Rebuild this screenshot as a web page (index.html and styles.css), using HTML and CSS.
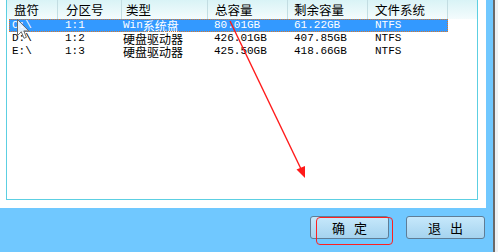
FILE: index.html
```html
<!DOCTYPE html>
<html lang="zh-CN">

<head>
    <meta charset="UTF-8">
    <title>分区选择</title>
    <link rel="stylesheet" href="styles.css">
</head>

<body>
    <div class="screen">
        <div class="window">

            <div class="client">
                <div class="list">
                    <div class="list-head">
                        <div class="hcell c1">盘符</div>
                        <div class="hcell c2">分区号</div>
                        <div class="hcell c3">类型</div>
                        <div class="hcell c4">总容量</div>
                        <div class="hcell c5">剩余容量</div>
                        <div class="hcell c6">文件系统</div>
                        <div class="hcell rest"></div>
                    </div>

                    <div class="row selected">
                        <div class="cell c1">C:\</div>
                        <div class="cell c2">1:1</div>
                        <div class="cell c3">Win<span class="zh">系统盘</span></div>
                        <div class="cell c4">80.01GB</div>
                        <div class="cell c5">61.22GB</div>
                        <div class="cell c6">NTFS</div>
                    </div>
                    <div class="row">
                        <div class="cell c1">D:\</div>
                        <div class="cell c2">1:2</div>
                        <div class="cell c3"><span class="zh">硬盘驱动器</span></div>
                        <div class="cell c4">426.01GB</div>
                        <div class="cell c5">407.85GB</div>
                        <div class="cell c6">NTFS</div>
                    </div>
                    <div class="row">
                        <div class="cell c1">E:\</div>
                        <div class="cell c2">1:3</div>
                        <div class="cell c3"><span class="zh">硬盘驱动器</span></div>
                        <div class="cell c4">425.50GB</div>
                        <div class="cell c5">418.66GB</div>
                        <div class="cell c6">NTFS</div>
                    </div>
                </div>
            </div>

            <div class="footer">
                <button class="btn"><span>确</span><span>定</span></button>
                <button class="btn"><span>退</span><span>出</span></button>
            </div>
        </div>
        <div class="edge"></div>
        <div class="outside"></div>
    </div>

    <!-- annotations drawn over the screenshot -->
    <div class="mark-box"></div>

    <svg class="cursor" width="13" height="21" viewBox="0 0 13 21">
        <path d="M0.5 0.5 L0.5 16.5 L4.3 12.8 L7 19.3 L9.4 18.3 L6.8 11.9 L11.8 11.9 Z"
              fill="#ffffff" fill-opacity="0.85" stroke="#6b6b6b" stroke-width="1" stroke-linejoin="round" />
    </svg>

    <svg class="red-arrow" width="498" height="252" viewBox="0 0 498 252">
        <line x1="230" y1="21" x2="301" y2="169" stroke="#ff1a1a" stroke-width="1.4" />
        <polygon points="305,178 296.5,169.5 305,166" fill="#ff1a1a" />
    </svg>
</body>
</html>
```

FILE: styles.css
```css
* {
    box-sizing: border-box;
    margin: 0;
    padding: 0;
}

body {
    width: 498px;
    height: 252px;
    overflow: hidden;
    background: #eef1f3;
    position: relative;
}

.screen {
    display: flex;
    height: 252px;
}

/* ── Ventana ── */
.window {
    width: 493px;
    background: #70c8ff;
    display: flex;
    flex-direction: column;
}

.edge {
    width: 2px;
    background: #6a6a6a;
}

.outside {
    width: 3px;
    background: #eef1f3;
}

.client {
    width: 486px;
    height: 208px;
    background: #ffffff;
    padding-left: 6px;
}

/* ── Lista ── */
.list {
    width: 472px;
    height: 201px;
    margin-top: -1px;
    border: 1px solid #5ccfe2;
    background: #ffffff;
}

.list-head {
    display: flex;
    height: 19px;
    background: linear-gradient(#d9f3f6, #f4fcfd);
    font-family: "Noto Sans CJK SC", sans-serif;
    font-size: 12.5px;
    color: #000000;
}

.hcell {
    height: 19px;
    line-height: 19px;
    border-right: 1px solid #c3dde2;
    white-space: nowrap;
}

.hcell.c1 { width: 51px; padding-left: 7px; }
.hcell.c2 { width: 64px; padding-left: 8px; }
.hcell.c3 { width: 86px; padding-left: 4px; }
.hcell.c4 { width: 80px; padding-left: 7px; }
.hcell.c5 { width: 80px; padding-left: 6px; }
.hcell.c6 { width: 80px; padding-left: 7px; }
.hcell.rest { flex: 1; border-right: none; }

.row {
    display: flex;
    width: 439px;
    height: 13px;
    margin-left: 2px;
    font-family: "Liberation Mono", monospace;
    font-size: 11px;
    line-height: 13px;
    color: #000000;
}

.row.selected {
    background: #3399ff;
    color: #ffffff;
    outline: 1px dotted #d9782a;
    outline-offset: -1px;
}

.cell {
    height: 13px;
    display: flex;
    align-items: center;
    white-space: nowrap;
}

.cell.c1 { width: 49px; padding-left: 3px; }
.cell.c2 { width: 64px; padding-left: 7px; }
.cell.c3 { width: 86px; padding-left: 1px; }
.cell.c4 { width: 80px; padding-left: 6px; }
.cell.c5 { width: 80px; padding-left: 6px; }
.cell.c6 { width: 80px; padding-left: 7px; }

.zh {
    font-family: "Noto Sans CJK SC", sans-serif;
    font-size: 12px;
    line-height: 13px;
    height: 13px;
    display: inline-block;
}

/* ── Botones ── */
.footer {
    flex: 1;
    display: flex;
    justify-content: flex-end;
    align-items: flex-start;
    gap: 17px;
    padding-top: 8px;
    padding-right: 8px;
}

.btn {
    width: 79px;
    height: 23px;
    display: flex;
    justify-content: center;
    align-items: center;
    gap: 9px;
    border: 1px solid #5f7d96;
    border-radius: 3px;
    background: linear-gradient(#c6e8fb, #a5d3ef);
    font-family: "Noto Sans CJK SC", sans-serif;
    font-size: 13px;
    color: #000000;
}

/* ── Anotaciones ── */
.mark-box {
    position: absolute;
    left: 316px;
    top: 217px;
    width: 77px;
    height: 28px;
    border: 1px solid #ff2020;
    border-radius: 4px;
}

.cursor {
    position: absolute;
    left: 17px;
    top: 19px;
}

.red-arrow {
    position: absolute;
    left: 0;
    top: 0;
    pointer-events: none;
}
```
